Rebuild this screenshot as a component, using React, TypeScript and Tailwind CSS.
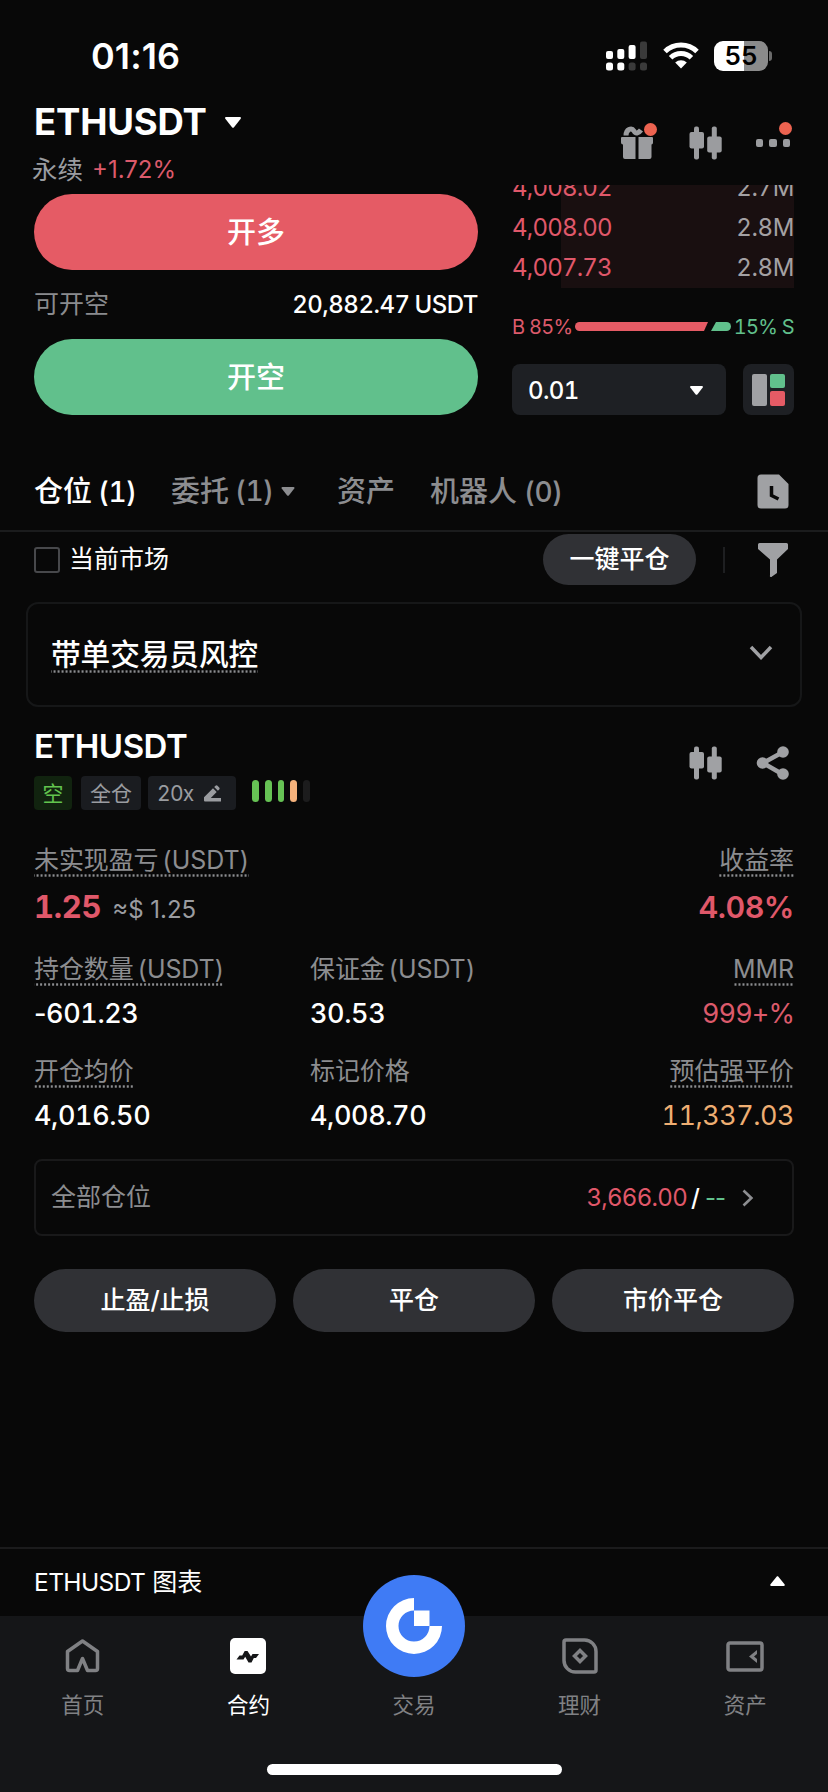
import type { ReactNode } from "react";
import { clsx } from "clsx";

interface IconProps {
    className?: string;
}

interface OrderRow {
    price: string;
    amount: string;
}

interface NavItem {
    label: string;
    icon: ReactNode;
    active?: boolean;
}

const orders: OrderRow[] = [
    { price: "4,008.02", amount: "2.7M" },
    { price: "4,008.00", amount: "2.8M" },
    { price: "4,007.73", amount: "2.8M" },
];

const riskBars = ["bg-[#66c254]", "bg-[#66c254]", "bg-[#66c254]", "bg-[#f5b27c]", "bg-[#1c1c1d]"];

const CandlesIcon = ({ className }: IconProps) => (
    <svg width="33" height="34" viewBox="0 0 33 34" fill="currentColor" className={className}>
        <rect x="5" y="0.5" width="5" height="33" rx="2" />
        <rect x="0.5" y="6" width="14.5" height="16.5" rx="2" />
        <rect x="22.8" y="0.5" width="5" height="33" rx="2" />
        <rect x="18.2" y="10.5" width="14.5" height="16" rx="2" />
    </svg>
);

const GiftIcon = () => (
    <svg width="32" height="34" viewBox="0 0 32 34" fill="currentColor">
        <path d="M1 11h13.500v22H4a2 2 0 0 1-2-2V18.500a2 2 0 0 1-2-2V12a1 1 0 0 1 1-1z" />
        <path d="M17.500 11H31a1 1 0 0 1 1 1v4.500a2 2 0 0 1-1.500 2V31a2 2 0 0 1-2 2h-11z" />
        <path d="M5 9.500C5 3.500 10.500 1 13 5c1.500 3 4.500 2.500 7-1" fill="none" stroke="currentColor" strokeWidth="5" />
    </svg>
);

const Triangle = ({ className }: IconProps) => (
    <svg viewBox="0 0 16 11" fill="currentColor" className={className}>
        <path d="M1.200 0h13.600c1 0 1.500 1 .9 1.800L9 10.300c-.6.700-1.400.7-2 0L.3 1.800C-.3 1 .2 0 1.200 0z" />
    </svg>
);

const Chevron = ({ className }: IconProps) => (
    <svg width="24" height="16" viewBox="0 0 24 16" fill="none" stroke="currentColor" strokeWidth="3.500" className={className}>
        <path d="M2 2l10 10.500L22 2" />
    </svg>
);

const StatusBar = () => (
    <div className="h-[97px] pl-[91px] pr-[56px] pt-[14px] flex justify-between items-center">
        <span className="text-[36px] font-semibold tracking-[0.1px] normal-nums leading-none">01:16</span>
        <div className="flex items-center">
            <svg width="41" height="30" viewBox="0 0 41 30" fill="#fff">
                <rect x="0" y="10" width="7" height="8" rx="2" />
                <rect x="11.300" y="8" width="7" height="10" rx="2" />
                <rect x="22.600" y="4" width="7" height="14" rx="2" />
                <rect x="34" y="0.500" width="7" height="17.500" rx="2" fill="#3a3a3a" />
                <rect x="0" y="21.500" width="7" height="8" rx="2.500" />
                <rect x="11.300" y="21.500" width="7" height="8" rx="2.500" />
                <rect x="22.600" y="21.500" width="7" height="8" rx="2.500" fill="#3a3a3a" />
                <rect x="34" y="21.500" width="7" height="8" rx="2.500" fill="#3a3a3a" />
            </svg>
            <svg width="36" height="27" viewBox="0 0 36 27" className="ml-4" fill="none" stroke="#fff" strokeWidth="5">
                <path d="M2 9.500a23 23 0 0 1 32 0" />
                <path d="M7.600 15.800a14.800 14.800 0 0 1 20.800 0" />
                <path d="M18 26.500l-5.800-6a8.300 8.300 0 0 1 11.600 0z" fill="#fff" stroke="none" />
            </svg>
            <div className="ml-[15px] w-[54px] h-[30px] rounded-[9px] bg-[linear-gradient(90deg,#fff_55%,#8b8b8b_55%)] flex items-center justify-center text-black text-[26px] font-semibold tracking-[-0.4px] leading-none">
                55
            </div>
            <div className="ml-px w-[3px] h-[10px] rounded-r-full bg-[#6b6b6b]" />
        </div>
    </div>
);

const Header = () => (
    <div className="h-[88px] px-[34px] flex justify-between">
        <div>
            <div className="h-[51px] flex items-center">
                <h1 className="text-[36.500px] font-bold leading-none tracking-[-0.2px]">ETHUSDT</h1>
                <Triangle className="ml-[18px] w-4 h-[11px]" />
            </div>
            <div className="h-[44px] -ml-[2px] flex items-center gap-[9px] leading-none">
                <span className="text-[25.500px] text-[#9a9ca0]">永续</span>
                <span className="text-[24px] normal-nums text-[#dc5a6b]">+1.72%</span>
            </div>
        </div>
        <div className="h-[92px] flex items-center text-[#9b9c9f]">
            <div className="relative">
                <GiftIcon />
                <span className="absolute -top-[3px] -right-[4px] size-[13px] rounded-full bg-[#ec6350]" />
            </div>
            <CandlesIcon className="ml-[36px]" />
            <div className="relative ml-[34px] mr-[4px] flex gap-[6px]">
                <span className="size-[7.500px] rounded-[2px] bg-current" />
                <span className="size-[7.500px] rounded-[2px] bg-current" />
                <span className="size-[7.500px] rounded-[2px] bg-current" />
                <span className="absolute -top-[17px] -right-[2px] size-[13px] rounded-full bg-[#ec6350]" />
            </div>
        </div>
    </div>
);

const TradePanel = () => (
    <div className="h-[263px] px-[34px] flex justify-between">
        <div className="w-[444px] pt-[9px]">
            <button className="block w-full h-[76px] pt-[2px] rounded-full bg-[#e55b65] text-[29px] font-medium">开多</button>
            <div className="h-[69px] flex items-center justify-between leading-none">
                <span className="text-[25px] text-[#8a8b8e]">可开空</span>
                <span className="text-[24px] font-medium tracking-[-0.5px] [word-spacing:-1px]">20,882.47 USDT</span>
            </div>
            <button className="block w-full h-[76px] pt-[2px] rounded-full bg-[#61c08c] text-[29px] font-medium">开空</button>
        </div>
        <div className="w-[282px]">
            <div className="h-[103px] overflow-hidden bg-[linear-gradient(90deg,transparent_49px,#190f10_49px)]">
                <div className="-mt-[17px]">
                    {orders.map((order) => (
                        <div key={order.price} className="h-10 flex items-center justify-between text-[24px] leading-none">
                            <span className="tracking-[-0.8px] text-[#e0586a]">{order.price}</span>
                            <span className="tracking-[-0.4px] text-[#a4a1a3]">{order.amount}</span>
                        </div>
                    ))}
                </div>
            </div>
            <div className="h-[77px] flex items-center justify-between text-[20px] tracking-[-0.7px] leading-none">
                <span className="text-[#dc5a6b]">B 85%</span>
                <svg width="156" height="9" viewBox="0 0 156 9">
                    <path d="M4.500 0H133l-4 9H4.500a4.500 4.500 0 0 1 0-9z" fill="#e55b65" />
                    <path d="M141 0h10.500a4.500 4.500 0 0 1 0 9H136z" fill="#61c08c" />
                </svg>
                <span className="text-[#61c08c]">15% S</span>
            </div>
            <div className="-mt-px flex items-center justify-between">
                <button className="w-[214px] h-[51px] pl-[16px] pr-[17px] pt-[2px] rounded-lg bg-[#1e2024] flex items-center justify-between text-[24px] font-medium tracking-[-0.6px] leading-none">
                    0.01
                    <Triangle className="w-[13px] h-[9px] mr-[6px]" />
                </button>
                <button className="w-[51px] h-[51px] rounded-lg bg-[#1e2024] flex items-center justify-center gap-[3px]">
                    <span className="w-[15px] h-8 rounded-[2px] bg-[#a0a1a4]" />
                    <span className="flex flex-col gap-[3px]">
                        <span className="size-[14.5px] rounded-[2px] bg-[#61c08c]" />
                        <span className="size-[14.5px] rounded-[2px] bg-[#e55b65]" />
                    </span>
                </button>
            </div>
        </div>
    </div>
);

const Tabs = () => (
    <div className="h-[84px] pt-[4px] pl-[34px] pr-[39px] border-b-2 border-[#1b1c1d] flex items-center text-[29px] font-medium leading-none text-[#8c8d90]">
        <span className="w-[137px] text-white">
            仓位<span className="ml-[6px] text-[28px] tracking-[-0.5px]">(1)</span>
        </span>
        <span className="w-[166px] flex items-center">
            委托<span className="ml-[6px] text-[28px] tracking-[-0.5px]">(1)</span>
            <Triangle className="ml-[7px] w-[14px] h-[9px]" />
        </span>
        <span className="w-[93px]">资产</span>
        <span>
            机器人<span className="ml-[7px] text-[28px] tracking-[-0.5px]">(0)</span>
        </span>
        <svg width="32" height="35" viewBox="0 0 32 35" fill="#a0a1a4" className="ml-auto">
            <path d="M4 .5h18L31.500 10v21a3.500 3.500 0 0 1-3.500 3.500H4A3.500 3.500 0 0 1 .5 31V4A3.500 3.500 0 0 1 4 .5z" />
            <path d="M14.500 12v9.500l7 3.500" fill="none" stroke="#080808" strokeWidth="3.500" />
        </svg>
    </div>
);

const FilterRow = () => (
    <div className="h-[56px] pb-px pl-[34px] pr-[40px] flex items-center leading-none text-[25px]">
        <span className="size-[26px] rounded-[3px] border-2 border-[#47484b]" />
        <span className="ml-[9px]">当前市场</span>
        <button className="ml-auto w-[153px] h-[51px] rounded-full bg-[#303135] font-medium">一键平仓</button>
        <span className="ml-[27px] w-[2px] h-[26px] bg-[#1e1f21]" />
        <svg width="30" height="34" viewBox="0 0 30 34" fill="#a0a1a4" className="ml-[33px]">
            <path d="M1.500 0h27a1.500 1.500 0 0 1 1.500 1.500V6l-11 10.500V30l-5 3.500a1 1 0 0 1-2-1v-16L0 6V1.500A1.500 1.500 0 0 1 1.500 0z" />
        </svg>
    </div>
);

// label with a dotted line under it, marks fields that open an explanation
const Dotted = ({ children, className }: { children: ReactNode; className?: string }) => (
    <span
        className={clsx(
            "inline-block leading-[1.16] tracking-[-0.1px] bg-[radial-gradient(circle_at_center,#8c8d90_1px,transparent_1.4px)] bg-[length:4px_3px] bg-repeat-x bg-bottom",
            className
        )}
    >
        {children}
    </span>
);

const RiskCard = () => (
    <div className="mt-[14px] mx-[26px] h-[105px] px-[23px] rounded-xl border-2 border-[#161718] flex items-center justify-between">
        <Dotted className="h-[36px] text-[29.700px] font-medium text-white">带单交易员风控</Dotted>
        <Chevron className="mr-[4px] -mt-[3px] text-[#a0a1a4]" />
    </div>
);

interface FieldProps {
    label: string;
    value: ReactNode;
    dotted?: boolean;
    right?: boolean;
    valueClass?: string;
}

const Field = ({ label, value, dotted, right, valueClass }: FieldProps) => (
    <div className={clsx("h-[102px] text-[#8c8d90]", right && "text-right")}>
        <div className="h-[32px] [word-spacing:-3px]">
            {dotted ? (
                <Dotted className="h-[31px] text-[25px]">{label}</Dotted>
            ) : (
                <span className="inline-block text-[25px] leading-[1.16] tracking-[-0.1px]">{label}</span>
            )}
        </div>
        <div className={clsx("mt-[13px] text-[27px] leading-none", valueClass || "font-medium text-white tracking-[-0.4px]")}>{value}</div>
    </div>
);

const Position = () => (
    <div className="px-[34px]">
        <div className="h-[105px] pt-[23px] flex justify-between">
            <div>
                <h2 className="text-[33px] font-semibold leading-none tracking-[-0.500px]">ETHUSDT</h2>
                <div className="mt-[13px] flex items-center leading-none text-[21px]">
                    <span className="w-[38px] h-[34px] rounded bg-[#11230f] text-[#62c44e] flex items-center justify-center">空</span>
                    <span className="ml-[9px] w-[60px] h-[34px] rounded bg-[#1a1c20] text-[#9a9ca0] flex items-center justify-center">全仓</span>
                    <span className="ml-[7px] w-[88px] h-[34px] pl-[9px] pr-[15px] rounded bg-[#1a1c20] text-[#9a9ca0] flex items-center justify-between">
                        <span className="tracking-[-0.7px]">20x</span>
                        <svg width="17" height="17" viewBox="0 0 17 17" fill="currentColor">
                            <path d="M11.500.8a1.500 1.500 0 0 1 2 0l1.700 1.700a1.500 1.500 0 0 1 0 2l-1.300 1.300L10.200 2.100zM9 3.300L12.700 7l-5.900 6H17v3.500H1a1 1 0 0 1-1-1v-3.200z" />
                        </svg>
                    </span>
                    <span className="ml-[16px] mb-[5px] flex gap-[6px]">
                        {riskBars.map((color, i) => (
                            <span key={i} className={clsx("w-[6.75px] h-[22px] rounded-full", color)} />
                        ))}
                    </span>
                </div>
            </div>
            <div className="pt-[16px] pr-[4px] flex gap-[34px] text-[#a0a1a4]">
                <CandlesIcon />
                <svg width="34" height="34" viewBox="0 0 34 34" fill="currentColor">
                    <path d="M27 6L7 17l20 11.500" fill="none" stroke="currentColor" strokeWidth="4.500" />
                    <circle cx="6.500" cy="17" r="5.800" />
                    <circle cx="27" cy="6" r="5.800" />
                    <circle cx="27" cy="28" r="5.800" />
                </svg>
            </div>
        </div>

        <div className="mt-[34px] h-[109px] flex justify-between">
            <div>
                <Dotted className="h-[31px] text-[25px] text-[#8c8d90] [word-spacing:-3px]">未实现盈亏 (USDT)</Dotted>
                <div className="mt-[11px] flex items-baseline gap-[11px] leading-[38px]">
                    <span className="text-[31px] font-bold tracking-[-0.3px] text-[#e0586a]">1.25</span>
                    <span className="text-[24px] normal-nums text-[#9a9ca0]">≈$ 1.25</span>
                </div>
            </div>
            <div className="text-right">
                <Dotted className="h-[31px] text-[25px] text-[#8c8d90]">收益率</Dotted>
                <div className="mt-[11px] text-[30.500px] font-semibold leading-[38px] tracking-[-0.5px] text-[#e0586a]">4.08%</div>
            </div>
        </div>

        <div className="grid grid-cols-[276px_242px_242px]">
            <Field label="持仓数量 (USDT)" value={<><span className="normal-nums">-</span>601.23</>} dotted />
            <Field label="保证金 (USDT)" value="30.53" />
            <Field label="MMR" value="999+%" dotted right valueClass="text-[#dc5a6b] tracking-[-0.9px]" />
            <Field label="开仓均价" value="4,016.50" dotted />
            <Field label="标记价格" value="4,008.70" />
            <Field label="预估强平价" value="11,337.03" dotted right valueClass="text-[#eeae72] tracking-[-0.5px]" />
        </div>

        <div className="h-[77px] pl-[15px] pr-[32px] rounded-lg border-2 border-[#19191a] flex items-center leading-none">
            <span className="text-[25px] text-[#8c8d90]">全部仓位</span>
            <span className="ml-auto text-[24px] tracking-[-0.7px] text-[#e0586a]">3,666.00</span>
            <span className="ml-[4px] text-[24px] font-medium normal-nums">/</span>
            <span className="ml-[5px] text-[24px] normal-nums tracking-[-1px] text-[#61c08c]">--</span>
            <Chevron className="ml-[11px] -rotate-90 text-[#8c8d90] scale-75" />
        </div>

        <div className="mt-[33px] grid grid-cols-3 gap-[17px] text-[25px] font-medium">
            <button className="h-[63px] pt-px rounded-full bg-[#303135]">止盈/止损</button>
            <button className="h-[63px] pt-px rounded-full bg-[#303135]">平仓</button>
            <button className="h-[63px] pt-px rounded-full bg-[#303135]">市价平仓</button>
        </div>
    </div>
);

const navItems: NavItem[] = [
    {
        label: "首页",
        icon: (
            <svg width="35" height="34" viewBox="0 0 35 34" fill="none" stroke="currentColor" strokeWidth="3.500" strokeLinejoin="round">
                <path d="M17.500 2L32.500 12.500V29.500a2 2 0 0 1-2 2H22.500L17.500 19.500l-5 12h-8a2 2 0 0 1-2-2v-17z" />
            </svg>
        ),
    },
    {
        label: "合约",
        active: true,
        icon: (
            <svg width="36" height="36" viewBox="0 0 36 36">
                <rect width="36" height="36" rx="5" fill="#fff" />
                <path d="M6.500 21.500l3-4h2.700l2.500-4.500h2.800l3.500 5.500 1.500-2.500h6.500l-3 4h-2.200l-2.300 4.500h-3l-3.300-5.700-1.700 2.700z" fill="#151618" />
            </svg>
        ),
    },
    { label: "交易", icon: null },
    {
        label: "理财",
        icon: (
            <svg width="36" height="36" viewBox="0 0 36 36" fill="none" stroke="currentColor" strokeWidth="3.500">
                <path d="M4 2h18.500A11.500 11.500 0 0 1 34 13.500V32a2 2 0 0 1-2 2H13.500A11.500 11.500 0 0 1 2 22.500V4a2 2 0 0 1 2-2z" />
                <path d="M18 12.500l5.500 5.500-5.500 5.500-5.500-5.500z" />
            </svg>
        ),
    },
    {
        label: "资产",
        icon: (
            <svg width="38" height="31" viewBox="0 0 38 31" fill="none" stroke="currentColor" strokeWidth="3.500">
                <rect x="2" y="2" width="34" height="27" rx="2" />
                <path d="M31 9v13l-8-6.500z" fill="currentColor" stroke="none" />
                <path d="M31 13l-3 2.500 3 2.500z" fill="#151618" stroke="none" />
            </svg>
        ),
    },
];

const BottomNav = () => (
    <div className="relative h-[176px] bg-[#151618] flex flex-col">
        <div className="grid grid-cols-5 pt-[20px]">
            {navItems.map((item) => (
                <div
                    key={item.label}
                    className={clsx("flex flex-col items-center leading-none text-[21.500px]", item.active ? "text-white" : "text-[#808184]")}
                >
                    <div className="h-10 flex items-center">{item.icon}</div>
                    <span className="mt-[19px]">{item.label}</span>
                </div>
            ))}
        </div>
        <div className="mt-auto mb-[17px] mx-auto w-[295px] h-[11px] rounded-full bg-white" />
        <button className="absolute left-1/2 -top-[41px] -translate-x-1/2 size-[102px] rounded-full bg-[#3f7bf5] flex items-center justify-center">
            <svg width="56" height="56" viewBox="-28 -28 56 56" fill="#fff">
                <path d="M28 0A28 28 0 1 1 0-28v12.500A15.500 15.500 0 1 0 15.500 0z" />
                <rect y="-15.500" width="15.500" height="15.500" />
            </svg>
        </button>
    </div>
);

const App = () => {
    return (
        <div className="w-[828px] h-[1792px] flex flex-col overflow-hidden whitespace-nowrap tabular-nums bg-[#080808] text-white font-['Inter','Noto_Sans_CJK_SC',sans-serif]">
            <StatusBar />
            <Header />
            <TradePanel />
            <Tabs />
            <FilterRow />
            <RiskCard />
            <Position />
            <div className="mt-auto h-[69px] pl-[34px] pr-[43px] border-t-2 border-[#1b1b1c] flex items-center justify-between leading-none">
                <span className="text-[25px]">
                    <span className="text-[24.500px] tracking-[-0.6px]">ETHUSDT</span>
                    <span className="ml-[7px]">图表</span>
                </span>
                <Triangle className="w-[15px] h-[10px] mb-[3px] rotate-180" />
            </div>
            <BottomNav />
        </div>
    );
};

export default App;
